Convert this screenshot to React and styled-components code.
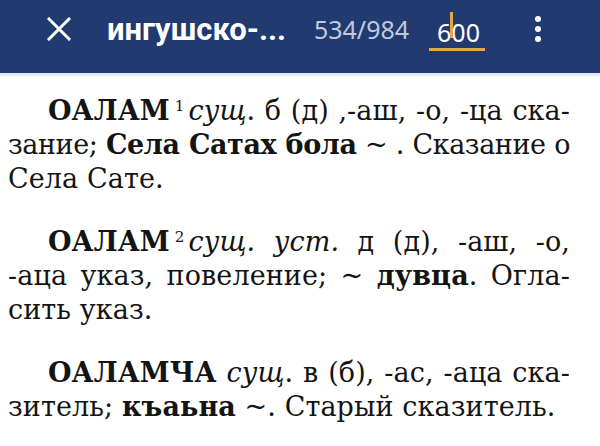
import React from 'react'
import styled, { createGlobalStyle } from 'styled-components'

const Global = createGlobalStyle`
  html, body { margin: 0; padding: 0; background: #fff; }
  body { width: 600px; height: 446px; overflow: hidden; }
`

const Page = styled.div`
  width: 600px;
  height: 446px;
  display: flex;
  flex-direction: column;
  background: #fff;
  overflow: hidden;
`

const Toolbar = styled.div`
  height: 73px;
  flex-shrink: 0;
  background: #213a6f;
  border-bottom: 3px solid #e3e8f1;
  display: flex;
  align-items: flex-start;
`

const ToolbarRow = styled.div`
  height: 58px;
  width: 100%;
  display: flex;
  align-items: center;
`

const CloseBtn = styled.div`
  width: 24px;
  height: 24px;
  margin-left: 47px;
  display: flex;
`

const Title = styled.div`
  margin-left: 36px;
  color: #fff;
  font-family: Roboto, "Liberation Sans", sans-serif;
  font-weight: 700;
  font-size: 31px;
  white-space: nowrap;
`

const Counter = styled.div`
  margin-left: 28px;
  color: #c2c9dc;
  font-family: "Noto Sans", "Open Sans", sans-serif;
  font-size: 25px;
  white-space: nowrap;
`

const PageInput = styled.div`
  position: relative;
  margin-left: 20px;
  width: 56px;
  padding-left: 8px;
  box-sizing: border-box;
  color: #fff;
  font-family: "Noto Sans", "Open Sans", sans-serif;
  font-size: 25px;
  border-bottom: 3px solid #e6a54a;
  line-height: 32px;
  margin-top: 8px;
`

const Caret = styled.span`
  position: absolute;
  left: 21px;
  top: -4px;
  width: 3px;
  height: 26px;
  background: #e6a54a;
`

const Kebab = styled.div`
  margin-left: 50px;
  display: flex;
  flex-direction: column;
  gap: 4px;
`

const Dot = styled.span`
  width: 6px;
  height: 6px;
  border-radius: 50%;
  background: #fff;
`

const Content = styled.div`
  padding: 18px 30px 0 8px;
  font-family: "DejaVu Serif", "Liberation Serif", serif;
  font-size: 27px;
  line-height: 34px;
  color: #141414;
`

const Entry = styled.div`
  margin-bottom: 29px;
`

const Line = styled.div`
  white-space: nowrap;
  text-align: ${p => (p.last ? 'left' : 'justify')};
  text-align-last: ${p => (p.last ? 'left' : 'justify')};
  padding-left: ${p => (p.first ? '40px' : '0')};
  letter-spacing: ${p => (p.tight ? '-0.4px' : '0.1px')};
`

const Head = styled.b`
  font-weight: 700;
`

const Sup = styled.sup`
  font-size: 15px;
  line-height: 0;
  vertical-align: 9px;
  margin: 0 4px 0 5px;
`

const Gram = styled.i`
  font-style: italic;
`

const Bold = styled.b`
  font-weight: 700;
`

export default function App() {
  return (
    <Page>
      <Global />
      <Toolbar>
        <ToolbarRow>
          <CloseBtn>
            <svg width="24" height="24" viewBox="0 0 24 24">
              <path d="M2 2 L22 22 M22 2 L2 22" stroke="#fff" strokeWidth="3" strokeLinecap="square" />
            </svg>
          </CloseBtn>
          <Title>ингушско-...</Title>
          <Counter>534/984</Counter>
          <PageInput>
            600
            <Caret />
          </PageInput>
          <Kebab>
            <Dot />
            <Dot />
            <Dot />
          </Kebab>
        </ToolbarRow>
      </Toolbar>
      <Content>
        <Entry>
          <Line first>
            <Head>ОАЛАМ</Head><Sup>1</Sup><Gram>сущ</Gram>. б (д) ,-аш, -о, -ца ска-
          </Line>
          <Line tight>
            зание; <Bold>Села Сатах бола</Bold> ~ . Сказание о
          </Line>
          <Line last>Села Сате.</Line>
        </Entry>
        <Entry>
          <Line first>
            <Head>ОАЛАМ</Head><Sup>2</Sup><Gram>сущ. уст.</Gram> д (д), -аш, -о,
          </Line>
          <Line>
            -аца указ, повеление; ~ <Bold>дувца</Bold>. Огла-
          </Line>
          <Line last>сить указ.</Line>
        </Entry>
        <Entry>
          <Line first>
            <Head>ОАЛАМЧА</Head> <Gram>сущ</Gram>. в (б), -ас, -аца ска-
          </Line>
          <Line last>
            зитель; <Bold>къаьна</Bold> ~. Старый сказитель.
          </Line>
        </Entry>
      </Content>
    </Page>
  )
}
